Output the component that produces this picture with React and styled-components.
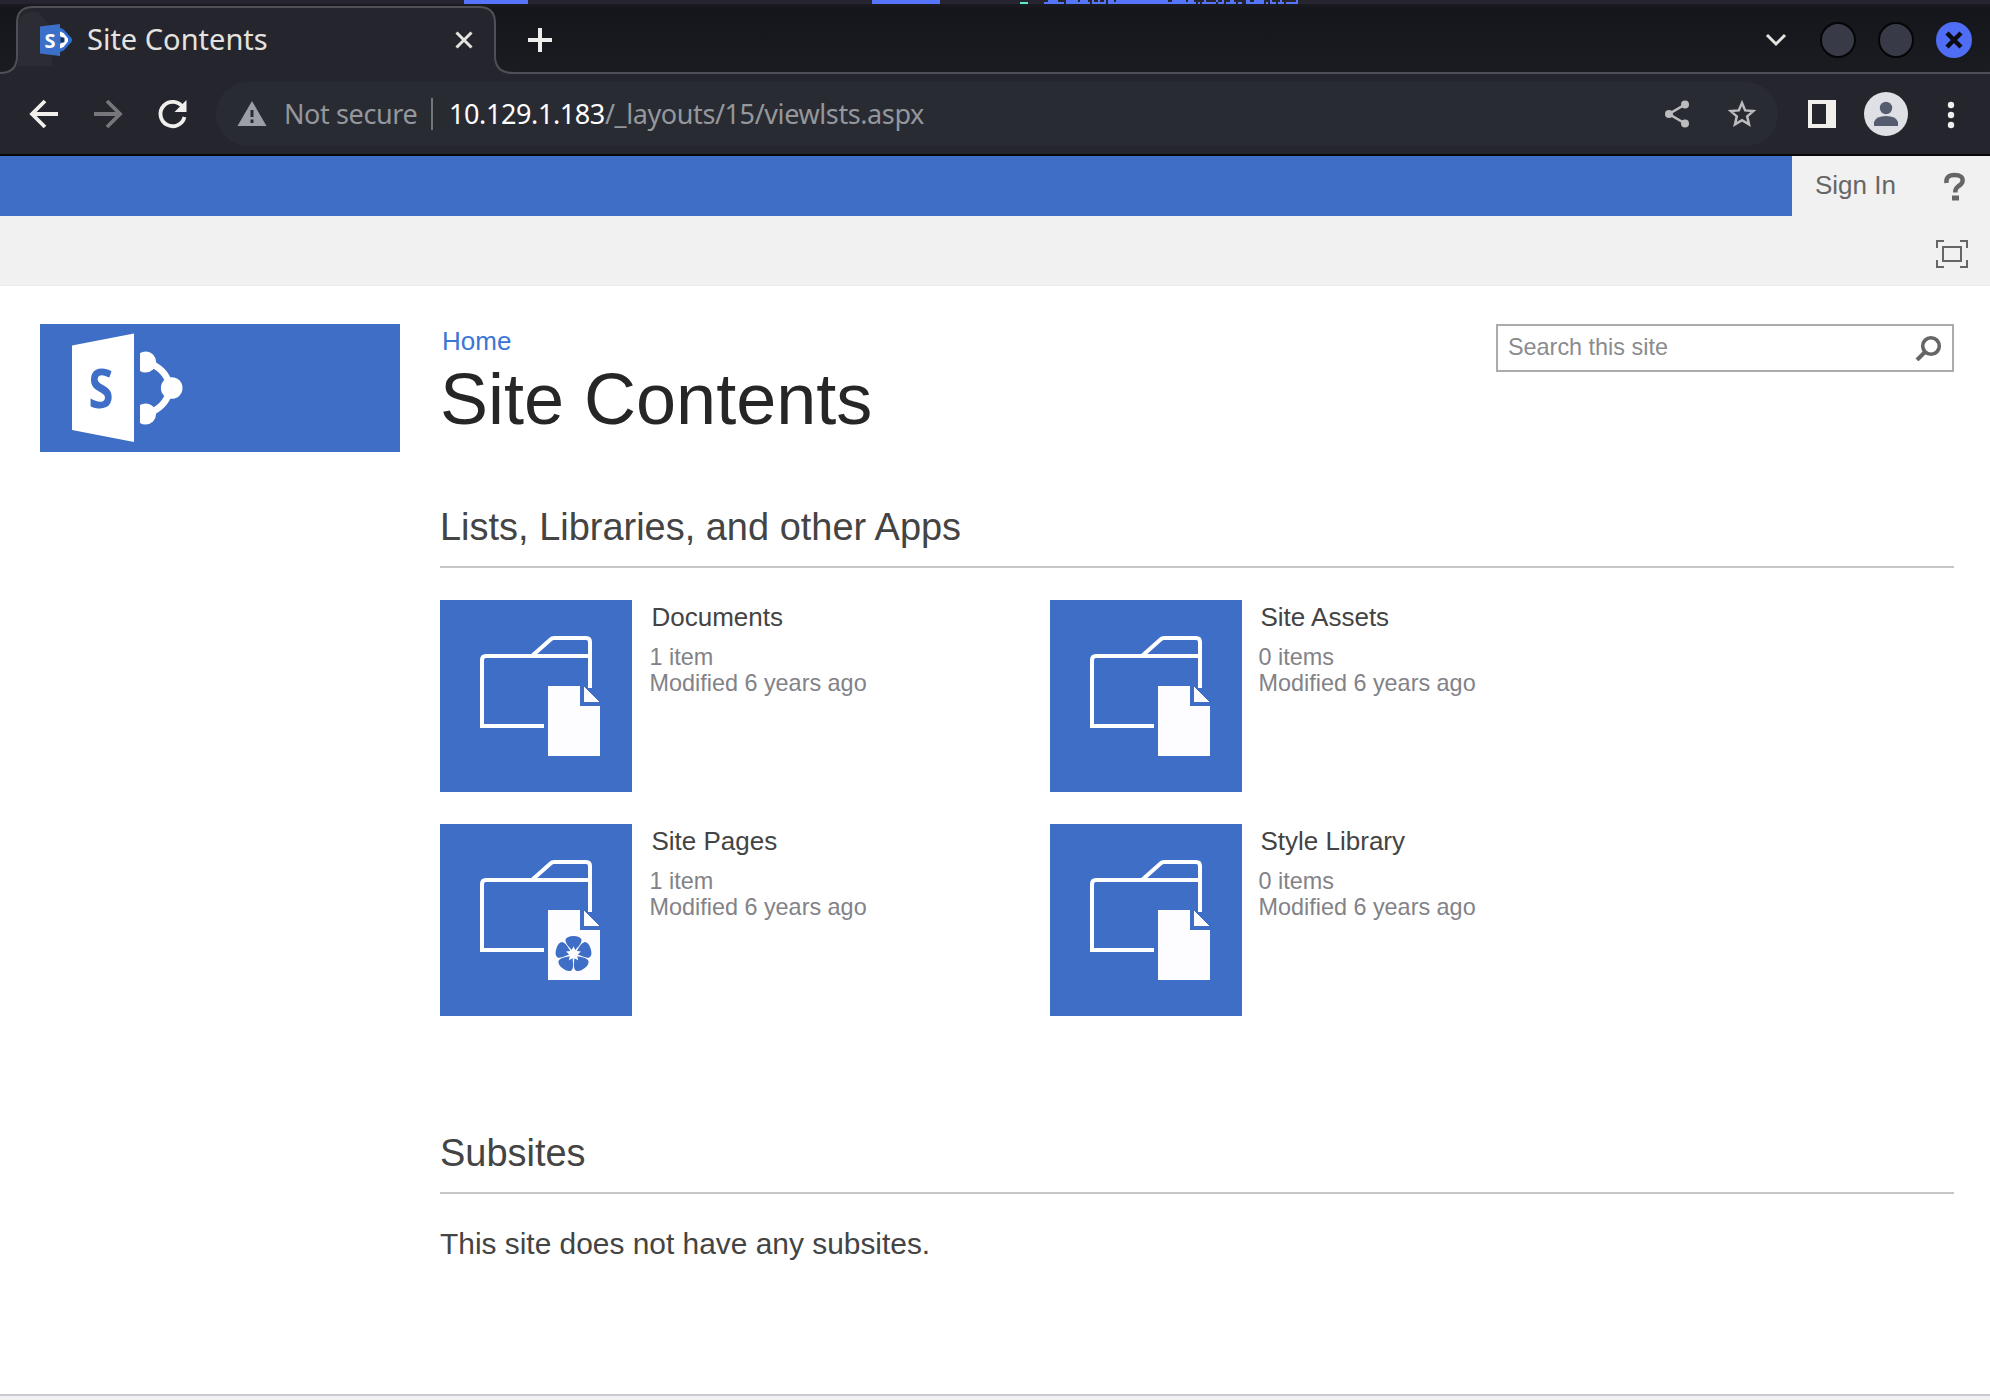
import React from "react";
import styled, { createGlobalStyle } from "styled-components";

const BLUE = "#3e6ec6";

const Global = createGlobalStyle`
  *, *::before, *::after { box-sizing: border-box; }
  html, body { margin: 0; padding: 0; background: #fff; }
  body { font-family: "Liberation Sans", Arial, sans-serif; overflow: hidden; }
  h1, h2, p { margin: 0; font-weight: 400; }
  svg { display: block; flex: none; }
`;

const Screen = styled.div`
  width: 1990px;
  height: 1400px;
  display: flex;
  flex-direction: column;
  background: #fff;
  overflow: hidden;
`;

/* ---------- browser window ---------- */
const Desktop = styled.div`
  height: 4px;
  background: #25242f;
`;

const TabStrip = styled.header`
  height: 70px;
  display: flex;
  align-items: flex-start;
  background: linear-gradient(#1b1c22 0, #15161b 5px, #1b1c21 100%);
  box-shadow: inset 0 -2px 0 #4f4f57;
`;

const TabShape = styled.div`
  position: relative;
  width: 513px;
  height: 70px;
  margin-right: 13px;
  font-family: "Noto Sans", sans-serif;
`;

const TabOutline = styled.svg`
  position: absolute;
  inset: 0;
`;

const TabContent = styled.div`
  position: relative;
  height: 70px;
  padding: 2px 0 0 40px;
  display: flex;
  align-items: center;
`;

const TabTitle = styled.span`
  width: 364px;
  margin-left: 15px;
  padding-bottom: 2px;
  font-size: 29px;
  line-height: 36px;
  color: #e4e3df;
`;

const StripButton = styled.span`
  height: ${(p) => p.$height || 68}px;
  display: flex;
  align-items: center;
  margin-left: ${(p) => p.$left || 0}px;
  margin-right: ${(p) => p.$right || 0}px;
`;

const Spacer = styled.div`
  flex: 1;
`;

const Toolbar = styled.nav`
  height: 82px;
  display: flex;
  align-items: center;
  padding: 0 25px 0 27px;
  background: #25252e;
  border-bottom: 2px solid #08080a;
`;

const NavIcons = styled.div`
  width: 189px;
  display: flex;
  gap: 32px;
`;

const Omnibox = styled.div`
  width: 1562px;
  height: 64px;
  margin-right: 30px;
  padding: 0 20px 0 20px;
  display: flex;
  align-items: center;
  border-radius: 32px;
  background: #292b33;
  font-family: "Noto Sans", sans-serif;
  font-size: 27px;
  letter-spacing: -0.4px;
  line-height: 40px;
  color: #94979c;
`;

const Security = styled.span`
  width: 147px;
  margin-left: 16px;
  padding-bottom: 1px;
  white-space: nowrap;
`;

const Divider = styled.i`
  width: 2px;
  height: 32px;
  background: #73757b;
`;

const Url = styled.span`
  flex: 1;
  margin-left: 16px;
  padding-bottom: 1px;
  b { font-weight: 400; color: #fff; }
`;

const OmniIcons = styled.div`
  display: flex;
  gap: 33px;
`;

const Tools = styled.div`
  display: flex;
  align-items: center;
`;

const Avatar = styled.div`
  width: 44px;
  height: 44px;
  margin: 0 39px 0 28px;
  border-radius: 50%;
  background: #dee0e6;
  overflow: hidden;
`;

/* ---------- site ---------- */
const SuiteBar = styled.div`
  height: 60px;
  display: flex;
  background: #f1f1f1;
`;

const SuiteFill = styled.div`
  width: 1792px;
  background: ${BLUE};
`;

const SignIn = styled.a`
  width: 151px;
  padding: 14px 0 0 23px;
  font-size: 26px;
  line-height: 30px;
  color: #666;
`;

const Help = styled.svg`
  margin-top: 16px;
`;

const RibbonRow = styled.div`
  height: 70px;
  display: flex;
  justify-content: flex-end;
  padding: 24px 22px 0 0;
  background: #f1f1f1;
  border-bottom: 1px solid #ebebeb;
`;

const Page = styled.main`
  flex: 1;
  display: flex;
  padding: 38px 36px 0 40px;
`;

const Logo = styled.div`
  width: 360px;
  height: 128px;
  margin-right: 40px;
  background: ${BLUE};
`;

const Content = styled.div`
  width: 1514px;
`;

const TitleRow = styled.div`
  height: 178px;
  display: flex;
  justify-content: space-between;
  align-items: flex-start;
`;

const Crumb = styled.a`
  display: block;
  padding: 2px 0 0 2px;
  font-size: 26px;
  line-height: 30px;
  color: #3b76d6;
`;

const Title = styled.h1`
  padding-top: 2px;
  font-size: 72px;
  line-height: 82px;
  color: #262626;
`;

const SearchBox = styled.div`
  width: 458px;
  height: 48px;
  display: flex;
  justify-content: space-between;
  padding: 8px 10px 0 10px;
  border: 2px solid #ababab;
  font-size: 23.4px;
  line-height: 26px;
  color: #8b8b8f;
  svg { margin-top: -1px; }
`;

const SectionHeading = styled.h2`
  height: 66px;
  padding-top: 3px;
  border-bottom: 2px solid #c6c6c6;
  font-size: 37.96px;
  line-height: 44px;
  color: #444;
`;

const TileGrid = styled.div`
  display: grid;
  grid-template-columns: 610px 610px;
  row-gap: 32px;
  padding-top: 32px;
`;

const Tile = styled.article`
  height: 192px;
  display: flex;
`;

const TileArt = styled.div`
  width: 192px;
  height: 192px;
  background: ${BLUE};
`;

const TileText = styled.div`
  padding: 2px 0 0 16.5px;
  ${Tile}:nth-child(odd) & { padding-left: 17.5px; }
`;

const TileName = styled.div`
  padding-left: 2px;
  font-size: 26px;
  line-height: 30px;
  color: #444;
`;

const TileMeta = styled.div`
  padding-top: 12px;
  font-size: 23.4px;
  line-height: 26px;
  color: #828287;
`;

const Subsites = styled.section`
  margin-top: 112px;
`;

const Note = styled.p`
  padding-top: 33px;
  font-size: 29.9px;
  line-height: 34px;
  color: #444;
`;

const BottomEdge = styled.div`
  height: 6px;
  background: #f1f1f1;
  border-top: 2px solid #c9cad1;
`;

const Favicon = () => (
  <svg width="32" height="32" viewBox="0 0 32 32">
    <path d="M20 4Q23 4 25 7L31.500 14Q32.500 16 31.500 18L25 25Q23 28 20 28z" fill="#2f6fd0" />
    <path d="M20 7.500 23.500 9 28 14.500V17.500L23.500 23 20 24.500V20L23 18V14L20 12z" fill="#fff" />
    <rect x="20.500" y="13.500" width="4" height="5" rx="1" fill="#1c3352" />
    <path d="M0 2.500 20 0V32L0 29.500z" fill="#3c70c8" />
    <text x="4.500" y="23.500" fontSize="20" fontWeight="700" fontFamily="Noto Sans, sans-serif" fill="#fff">S</text>
  </svg>
);

const FolderArt = ({ flower }) => (
  <svg width="192" height="192" viewBox="0 0 192 192">
    <g fill="none" stroke="#fff" strokeWidth="4">
      <path d="M104 126H42V60Q42 56 46 56H148" />
      <path d="M92.500 55.500 110.500 39.500Q112 38 114 38H146Q150 38 150 42V88" />
    </g>
    <path d="M108 86H140V106H160V156H108z" fill="#fdfdff" />
    <path d="M144 86 160 102H144z" fill="#fdfdff" />
    <path d="M144 86 160 102" stroke={BLUE} strokeWidth="1" />
    {flower && (
      <g transform="translate(133.500 130)" fill={BLUE}>
        {[0, 72, 144, 216, 288].map((a) => (
          <path
            key={a}
            transform={`rotate(${a})`}
            d="M0-7 L-1.800-4 L-3.500-6 Q-8.500-11-8-14.500 Q-6.500-18 0-18 Q6.500-18 8-14.500 Q8.500-11 3.500-6 L1.800-4z"
          />
        ))}
        <path
          d="M0-8 1.800-2.500 7.600-2.500 3 1 4.700 6.500 0 3 -4.700 6.500 -3 1 -7.600-2.500 -1.800-2.500z"
          fill="#fdfdff"
        />
      </g>
    )}
  </svg>
);

/* slivers of the terminal window visible above the browser: [x, width] */
const sliverTop = [
  [1048, 10], [1066, 12], [1080, 8], [1092, 2], [1098, 2], [1104, 2], [1108, 6],
  [1116, 52], [1172, 14], [1188, 6], [1204, 2], [1216, 2], [1222, 2], [1230, 4],
  [1246, 4], [1254, 10], [1270, 2], [1280, 2], [1296, 2],
];
const sliverBottom = [
  [1044, 20], [1066, 24], [1092, 14], [1108, 88], [1198, 2], [1202, 14], [1218, 6],
  [1226, 10], [1238, 4], [1246, 18], [1266, 2], [1270, 6], [1278, 6], [1286, 12],
];

const tiles = [
  { name: "Documents", count: "1 item" },
  { name: "Site Assets", count: "0 items" },
  { name: "Site Pages", count: "1 item", flower: true },
  { name: "Style Library", count: "0 items" },
];

export default function App() {
  return (
    <Screen>
      <Global />
      <Desktop>
        <svg width="1990" height="4" fill="#5575fb">
          <rect x="464" width="64" height="4" />
          <rect x="872" width="68" height="4" />
          <rect x="1020" y="2" width="8" height="2" fill="#5fe8d0" />
          {sliverTop.map(([x, w]) => (
            <rect key={x} x={x} width={w} height="2" />
          ))}
          {sliverBottom.map(([x, w]) => (
            <rect key={x} x={x} y="2" width={w} height="2" />
          ))}
        </svg>
      </Desktop>
      <TabStrip>
        <TabShape>
          <TabOutline width="513" height="70">
            <path
              d="M0 69Q17 69 17 52V19Q17 3 33 3H479Q495 3 495 19V52Q495 69 512 69H513V70H0z"
              fill="#25252e"
            />
            <path d="M18 20Q20 8 32 8H38L52 24V62H18z" fill="#2c2c35" />
            <path
              d="M0 69Q17 69 17 52V19Q17 3 33 3H479Q495 3 495 19V52Q495 69 513 69"
              fill="none"
              stroke="#4f4f57"
              strokeWidth="2"
            />
          </TabOutline>
          <TabContent>
            <Favicon />
            <TabTitle>Site Contents</TabTitle>
            <svg width="24" height="24" viewBox="0 0 24 24">
              <path d="M5.500 4.500 20.500 19.500M20.500 4.500 5.500 19.500" stroke="#e4e3df" strokeWidth="3" />
            </svg>
          </TabContent>
        </TabShape>
        <StripButton $left={2} $height={72}>
          <svg width="24" height="24" viewBox="0 0 24 24">
            <path d="M0 12H24M12 0V24" stroke="#efeeec" strokeWidth="4" />
          </svg>
        </StripButton>
        <Spacer />
        <StripButton $right={17}>
          <svg width="210" height="40" viewBox="0 0 210 40">
            <path d="M4 17 13 26 22 17" fill="none" stroke="#e4e3df" strokeWidth="3" />
            <circle cx="75" cy="22" r="17" fill="#383a47" stroke="#050507" strokeWidth="2" />
            <circle cx="133" cy="22" r="17" fill="#383a47" stroke="#050507" strokeWidth="2" />
            <circle cx="191" cy="22" r="18" fill="#4f6df5" />
            <path d="M184 15 198 29M198 15 184 29" stroke="#0b0b10" strokeWidth="4.500" />
          </svg>
        </StripButton>
      </TabStrip>
      <Toolbar>
        <NavIcons>
          <svg width="32" height="32" viewBox="0 0 32 32">
            <path d="M31 16H6M18 3 5 16 18 29" fill="none" stroke="#f0efec" strokeWidth="3.800" />
          </svg>
          <svg width="32" height="32" viewBox="0 0 32 32">
            <path d="M3 16H28M16 3 29 16 16 29" fill="none" stroke="#76767b" strokeWidth="3.800" />
          </svg>
          <svg width="34" height="32" viewBox="0 0 34 32">
            <path d="M28 9.500A12.200 12.200 0 1 0 29.500 19" fill="none" stroke="#f0efec" strokeWidth="3.800" />
            <path d="M31.500 2V14H19.500z" fill="#f0efec" />
          </svg>
        </NavIcons>
        <Omnibox>
          <svg width="32" height="32" viewBox="0 0 32 32">
            <path d="M16 3 30.500 28H1.500z" fill="#9aa0a6" />
            <path d="M16 12V19M16 21.500V25" stroke="#292b33" strokeWidth="3" />
          </svg>
          <Security>Not secure</Security>
          <Divider />
          <Url>
            <b>10.129.1.183</b>/_layouts/15/viewlsts.aspx
          </Url>
          <OmniIcons>
            <svg width="32" height="32" viewBox="0 0 32 32">
              <path d="M24 6.500 8 16 24 25.500" fill="none" stroke="#bcbcbe" strokeWidth="2.600" />
              <g fill="#bcbcbe">
                <circle cx="24" cy="6.500" r="4" />
                <circle cx="8" cy="16" r="4" />
                <circle cx="24" cy="25.500" r="4" />
              </g>
            </svg>
            <svg width="32" height="32" viewBox="0 0 30 32">
              <path
                d="M15 5 18.200 12.400 26.300 13.100 20.200 18.400 22 26.300 15 22.100 8 26.300 9.800 18.400 3.700 13.100 11.800 12.400z"
                fill="none"
                stroke="#bcbcbe"
                strokeWidth="2.500"
              />
            </svg>
          </OmniIcons>
        </Omnibox>
        <Tools>
          <svg width="28" height="28" viewBox="0 0 28 28">
            <path d="M0 0H28V28H0zM4 4V24H18V4z" fill="#f0efec" fillRule="evenodd" />
          </svg>
          <Avatar>
            <svg width="44" height="44" viewBox="0 0 44 44">
              <circle cx="22" cy="16" r="6.200" fill="#565c70" />
              <path d="M10 34V30Q12 24 22 24Q32 24 34 30V34z" fill="#565c70" />
            </svg>
          </Avatar>
          <svg width="8" height="30" viewBox="0 0 8 30">
            <g fill="#f0efec">
              <circle cx="4" cy="6" r="3.200" />
              <circle cx="4" cy="16" r="3.200" />
              <circle cx="4" cy="26" r="3.200" />
            </g>
          </svg>
        </Tools>
      </Toolbar>

      <SuiteBar>
        <SuiteFill />
        <SignIn>Sign In</SignIn>
        <Help width="24" height="30" viewBox="0 0 24 30">
          <path d="M3.500 11Q2.500 3 11.500 3Q20.500 3 19.500 9.500Q19 12 15 14.500Q12.200 16.500 12.200 20.500" fill="none" stroke="#666" strokeWidth="4.500" />
          <rect x="9" y="23.500" width="7" height="5" fill="#666" />
        </Help>
      </SuiteBar>
      <RibbonRow>
        <svg width="32" height="28" viewBox="0 0 32 28">
          <g fill="none" stroke="#666" strokeWidth="2">
            <path d="M1 8V1H8M24 1H31V8M31 20V27H24M8 27H1V20" />
            <rect x="7" y="7" width="18" height="14" />
          </g>
        </svg>
      </RibbonRow>

      <Page>
        <Logo>
          <svg width="360" height="128" viewBox="0 0 360 128">
            <path d="M32 21.500 94 9.500V118L32 106z" fill="#fff" />
            <text
              transform="translate(48.500 83.500) scale(.84 1)"
              fontSize="54"
              fontWeight="700"
              fontFamily="Noto Sans, sans-serif"
              fill={BLUE}
            >
              S
            </text>
            <clipPath id="mark"><rect x="100" y="20" width="60" height="90" /></clipPath>
            <g clipPath="url(#mark)">
              <path d="M112 40Q128 48 130 64Q128 80 112 88" fill="none" stroke="#fff" strokeWidth="6.500" />
              <circle cx="105.500" cy="38" r="10.600" fill="#fff" />
              <circle cx="131.700" cy="64" r="10.800" fill="#fff" />
              <circle cx="105.500" cy="90" r="10.600" fill="#fff" />
            </g>
          </svg>
        </Logo>
        <Content>
          <TitleRow>
            <div>
              <Crumb>Home</Crumb>
              <Title>Site Contents</Title>
            </div>
            <SearchBox>
              Search this site
              <svg width="28" height="28" viewBox="0 0 28 28">
                <circle cx="17" cy="13" r="8.300" fill="none" stroke="#666" strokeWidth="3.600" />
                <path d="M11 19 3 27" stroke="#666" strokeWidth="4" />
              </svg>
            </SearchBox>
          </TitleRow>
          <SectionHeading>Lists, Libraries, and other Apps</SectionHeading>
          <TileGrid>
            {tiles.map((t) => (
              <Tile key={t.name}>
                <TileArt>
                  <FolderArt flower={t.flower} />
                </TileArt>
                <TileText>
                  <TileName>{t.name}</TileName>
                  <TileMeta>
                    {t.count}
                    <br />
                    Modified 6 years ago
                  </TileMeta>
                </TileText>
              </Tile>
            ))}
          </TileGrid>
          <Subsites>
            <SectionHeading>Subsites</SectionHeading>
            <Note>This site does not have any subsites.</Note>
          </Subsites>
        </Content>
      </Page>
      <BottomEdge />
    </Screen>
  );
}
